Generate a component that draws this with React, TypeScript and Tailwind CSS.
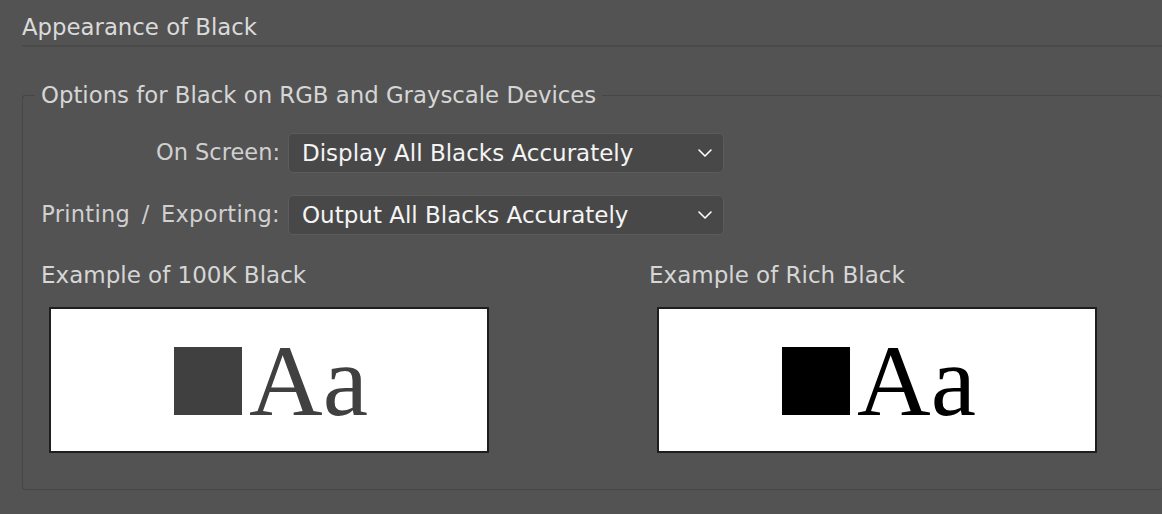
import { ChevronDown } from "lucide-react";

const uiFont = { fontFamily: '"DejaVu Sans", "Liberation Sans", sans-serif' };

function Dropdown({ value }: { value: string }) {
  return (
    <div className="flex h-[40px] w-[436px] items-center justify-between rounded-[5px] border border-[#5c5c5c] bg-[#484848] pl-[13px] pr-[6px] text-[23px] text-[#f4f4f4]">
      <span>{value}</span>
      <ChevronDown className="h-[24px] w-[24px] text-white" strokeWidth={1.6} />
    </div>
  );
}

function Sample({ label, tone }: { label: string; tone: "gray" | "black" }) {
  const squareClass = tone === "gray" ? "bg-[#404040]" : "bg-black";
  const textClass = tone === "gray" ? "text-[#404040]" : "text-black";
  return (
    <div className="flex flex-col">
      <div className="h-[26px] text-[23px] leading-[26px] text-[#d6d6d6]">{label}</div>
      <div className="ml-[8px] mt-[19px] flex h-[146px] w-[440px] items-center justify-center border-2 border-[#1e1e1e] bg-white">
        <div className="flex items-baseline gap-[7px] pl-[4px] pt-[2px]">
          <div className={`h-[68px] w-[68px] ${squareClass}`} />
          <span
            className={`text-[102px] leading-none ${textClass}`}
            style={{ fontFamily: '"Liberation Serif", "Times New Roman", serif' }}
          >
            Aa
          </span>
        </div>
      </div>
    </div>
  );
}

export default function App() {
  return (
    <div className="h-[514px] w-full overflow-hidden bg-[#535353] pl-[22px]" style={uiFont}>
      {/* title */}
      <div className="h-[47px] border-b-2 border-[#4a4a4a] pt-[13px] text-[22.8px] leading-[28px] text-[#dadada]">
        Appearance of Black
      </div>

      {/* options group */}
      <fieldset className="mt-[35px] rounded-[3px] border border-r-0 border-[#464646] pb-[36px]">
        <legend className="ml-[12px] px-[6px] text-[22.8px] leading-[26px] text-[#d6d6d6]">
          Options for Black on RGB and Grayscale Devices
        </legend>

        <div className="pl-[18px]">
          <div className="mt-[25px] grid grid-cols-[239px_auto] items-center gap-x-[8px] gap-y-[22px] text-[22.5px] text-[#d0d0d0]">
            <div className="text-right">On Screen:</div>
            <Dropdown value="Display All Blacks Accurately" />
            <div className="whitespace-nowrap text-right tracking-[0.3px] [word-spacing:4px]">Printing / Exporting:</div>
            <Dropdown value="Output All Blacks Accurately" />
          </div>

          <div className="mt-[27px] grid grid-cols-[608px_auto]">
            <Sample label="Example of 100K Black" tone="gray" />
            <Sample label="Example of Rich Black" tone="black" />
          </div>
        </div>
      </fieldset>
    </div>
  );
}
